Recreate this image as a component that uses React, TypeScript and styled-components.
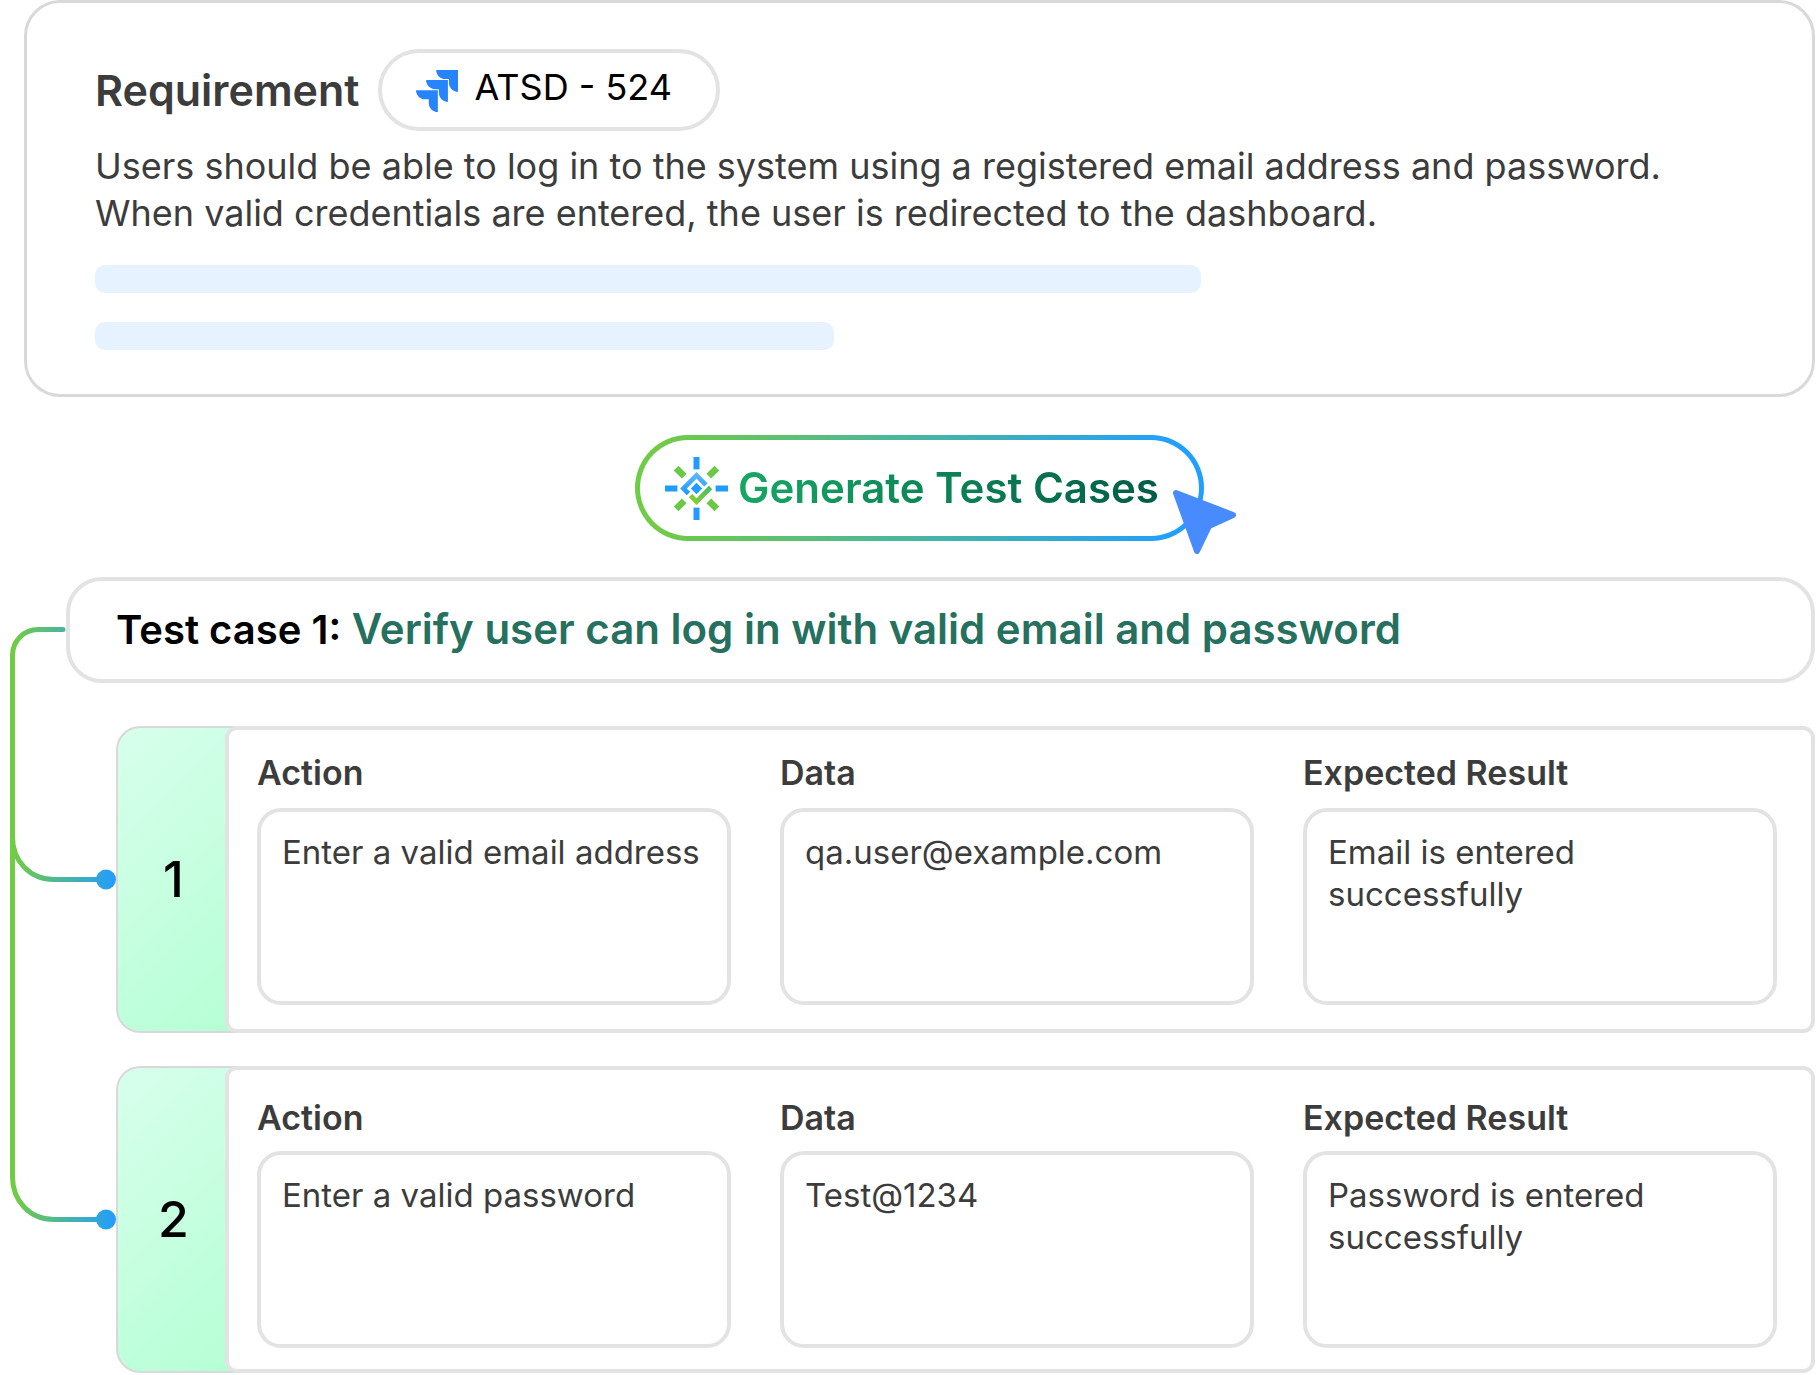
import React from "react";
import styled, { createGlobalStyle } from "styled-components";

const GlobalStyle = createGlobalStyle`
  *, *::before, *::after { box-sizing: border-box; }
  body {
    margin: 0;
    background: #fff;
    color: #3c3c3c;
    font-family: Inter, "Liberation Sans", sans-serif;
  }
`;

const Page = styled.main`
  display: flex;
  flex-direction: column;
  padding: 0 3px 2px 0;
`;

const RequirementCard = styled.section`
  margin-left: 24px;
  padding: 46px 68px 44px;
  border: 3px solid #d9d9d9;
  border-radius: 36px;
`;

const CardHeader = styled.header`
  display: flex;
  align-items: center;
  gap: 18px;
`;

const CardTitle = styled.h1`
  margin: 0;
  font-size: 43px;
  line-height: 52px;
  font-weight: 600;
`;

const IssueLink = styled.a`
  display: flex;
  align-items: center;
  gap: 17px;
  height: 82px;
  padding: 2px 44px 0 34px;
  border: 4px solid #e3e3e3;
  border-radius: 41px;
  color: #000;
  font-size: 36px;
  line-height: 44px;
  text-decoration: none;

  span { padding-bottom: 8px; }
`;

const Description = styled.p`
  margin: 12px 0 28px;
  font-size: 36px;
  line-height: 47px;
`;

const Placeholder = styled.div<{ $width: string }>`
  width: ${(p) => p.$width};
  height: 28px;
  border-radius: 10px;
  background: #e6f2ff;

  & + & { margin-top: 29px; }
`;

const GenerateButton = styled.button`
  position: relative;
  align-self: center;
  display: flex;
  align-items: center;
  gap: 10px;
  height: 106px;
  margin: 38px 0 36px 24px;
  padding: 0 40px 0 25px;
  border: 5px solid transparent;
  border-radius: 53px;
  background:
    linear-gradient(#fff, #fff) padding-box,
    linear-gradient(90deg, #70cb45 4%, #209fff 96%) border-box;
  font: 600 42px/52px Inter, "Liberation Sans", sans-serif;
  cursor: pointer;
`;

const GradientText = styled.span`
  background: linear-gradient(100deg, #17a864, #005c47);
  background-clip: text;
  color: transparent;
`;

const Cursor = styled.svg`
  position: absolute;
  right: -38px;
  bottom: -19px;
`;

const Suite = styled.section`
  display: grid;
  grid-template-columns: 66px 50px 1fr;
  grid-template-rows: auto 43px auto 33px auto;
`;

const Connector = styled.svg`
  grid-area: 1 / 1 / -1 / 3;
  overflow: visible;
`;

const SuiteTitle = styled.h2`
  grid-area: 1 / 2 / 2 / 4;
  margin: 0;
  padding: 22px 46px 23px;
  border: 4px solid #e3e3e3;
  border-radius: 36px;
  color: #26705f;
  font-size: 42px;
  line-height: 52px;
  font-weight: 600;

  strong {
    color: #000;
    font-size: 40px;
    font-weight: 600;
  }
`;

const Step = styled.article<{ $row: number }>`
  grid-column: 3;
  grid-row: ${(p) => p.$row};
  display: flex;
  height: 307px;
`;

const StepNumber = styled.div`
  flex: 0 0 125px;
  display: flex;
  align-items: center;
  justify-content: center;
  margin-right: -16px;
  padding: 0 12px 2px 0;
  border: 2px solid #d9d9d9;
  border-right: 0;
  border-radius: 24px 0 0 24px;
  background: linear-gradient(135deg, #d8ffec, #b4ffd4);
  color: #000;
  font-size: 50px;
  font-weight: 500;
`;

const StepFields = styled.div<{ $top: number }>`
  flex: 1;
  display: grid;
  grid-template-columns: repeat(3, 1fr);
  gap: 49px;
  align-items: start;
  padding: ${(p) => p.$top}px 34px 0 28px;
  border: 4px solid #e3e3e3;
  border-radius: 12px;
  background: #fff;
`;

const Field = styled.label<{ $gap: number }>`
  display: flex;
  flex-direction: column;
  gap: ${(p) => p.$gap}px;
  font-size: 34px;
  line-height: 42px;
  font-weight: 600;
`;

const FieldBox = styled.textarea`
  width: 100%;
  height: 197px;
  padding: 19px 21px;
  border: 4px solid #e3e3e3;
  border-radius: 24px;
  outline: none;
  resize: none;
  overflow: hidden;
  background: #fff;
  color: #3c3c3c;
  font: 400 33px/42px Inter, "Liberation Sans", sans-serif;
`;

const JiraIcon = () => (
  <svg width="42" height="42" viewBox="0 0 125 125" fill="#2684ff" aria-hidden="true">
    {[[60, 0], [30, 30], [0, 60]].map(([x, y]) => (
      <path
        key={x}
        transform={`translate(${x} ${y})`}
        d="M0 0H65V65C50 65 38 53 38 38V27H27C12 27 0 15 0 0Z"
      />
    ))}
  </svg>
);

const SparkIcon = () => (
  <svg width="63" height="63" viewBox="0 0 188 188" aria-hidden="true">
    <defs>
      <linearGradient id="roof" x1="0" y1="0" x2="0" y2="1">
        <stop offset="0" stopColor="#5cb4ff" />
        <stop offset="1" stopColor="#1f9bff" />
      </linearGradient>
      <linearGradient id="tick" x1="0" y1="1" x2="1" y2="0">
        <stop offset="0" stopColor="#8bcf2f" />
        <stop offset="1" stopColor="#3fc060" />
      </linearGradient>
    </defs>
    <g fill="#219dff">
      <rect x="85" y="0" width="18" height="37" />
      <rect x="85" y="151" width="18" height="37" />
      <rect x="0" y="85" width="37" height="18" />
      <rect x="151" y="85" width="37" height="18" />
      <path d="M94 77L111 94L94 111L77 94Z" />
    </g>
    <g fill="#6cc947">
      {[45, 135, 225, 315].map((a) => (
        <rect key={a} x="84" y="8" width="20" height="34" transform={`rotate(${a} 94 94)`} />
      ))}
    </g>
    <path d="M70 109L55 94L94 55L122 83" fill="none" stroke="url(#roof)" strokeWidth="14" />
    <path d="M76 115L94 133L136 91" fill="none" stroke="url(#tick)" strokeWidth="14" />
  </svg>
);

const steps = [
  {
    row: 3,
    top: 22,
    gap: 14,
    fields: [
      ["Action", "Enter a valid email address"],
      ["Data", "qa.user@example.com"],
      ["Expected Result", "Email is entered successfully"],
    ],
  },
  {
    row: 5,
    top: 27,
    gap: 12,
    fields: [
      ["Action", "Enter a valid password"],
      ["Data", "Test@1234"],
      ["Expected Result", "Password is entered successfully"],
    ],
  },
];

export default function App() {
  return (
    <>
      <GlobalStyle />
      <Page>
        <RequirementCard>
          <CardHeader>
            <CardTitle>Requirement</CardTitle>
            <IssueLink href="#atsd-524">
              <JiraIcon />
              <span>ATSD - 524</span>
            </IssueLink>
          </CardHeader>
          <Description>
            Users should be able to log in to the system using a registered email address and
            password.
            <br />
            When valid credentials are entered, the user is redirected to the dashboard.
          </Description>
          <Placeholder $width="67.1%" />
          <Placeholder $width="44.8%" />
        </RequirementCard>

        <GenerateButton type="button">
          <SparkIcon />
          <GradientText>Generate Test Cases</GradientText>
          <Cursor width="65" height="66" viewBox="0 0 65 66" aria-hidden="true">
            <path
              d="M4 4L61 26L37 37L25 62Z"
              fill="#478bff"
              stroke="#478bff"
              strokeWidth="6"
              strokeLinejoin="round"
            />
          </Cursor>
        </GenerateButton>

        <Suite>
          <Connector width="116" height="796" viewBox="0 0 116 796" aria-hidden="true">
            <defs>
              <linearGradient id="wire" gradientUnits="userSpaceOnUse" x1="15" y1="0" x2="116" y2="0">
                <stop offset="0" stopColor="#70cb45" />
                <stop offset="1" stopColor="#219dff" />
              </linearGradient>
            </defs>
            <g fill="none" stroke="url(#wire)" strokeWidth="5" strokeLinecap="round">
              <path d="M63 52.500H38C24 52.500 12.500 64 12.500 78V600C12.500 624 30 642.500 54 642.500H100" />
              <path d="M12.500 260C12.500 284 30 302.500 54 302.500H100" />
            </g>
            <circle cx="106" cy="302.500" r="10" fill="url(#wire)" />
            <circle cx="106" cy="642.500" r="10" fill="url(#wire)" />
          </Connector>
          <SuiteTitle>
            <strong>Test case 1:</strong> Verify user can log in with valid email and password
          </SuiteTitle>
          {steps.map((step, i) => (
            <Step key={step.row} $row={step.row}>
              <StepNumber>{i + 1}</StepNumber>
              <StepFields $top={step.top}>
                {step.fields.map(([name, value]) => (
                  <Field key={name} $gap={step.gap}>
                    {name}
                    <FieldBox defaultValue={value} />
                  </Field>
                ))}
              </StepFields>
            </Step>
          ))}
        </Suite>
      </Page>
    </>
  );
}
